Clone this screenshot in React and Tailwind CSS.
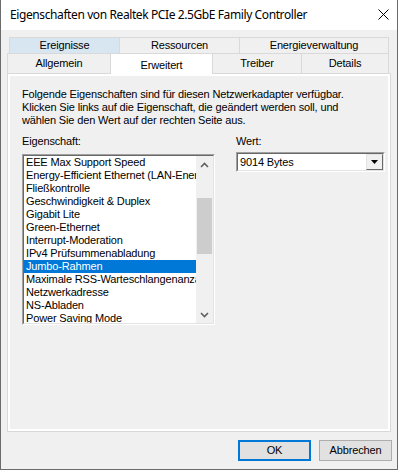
import React from "react";

const items = [
  "EEE Max Support Speed",
  "Energy-Efficient Ethernet (LAN-Energiesparmodus)",
  "Fließkontrolle",
  "Geschwindigkeit & Duplex",
  "Gigabit Lite",
  "Green-Ethernet",
  "Interrupt-Moderation",
  "IPv4 Prüfsummenabladung",
  "Jumbo-Rahmen",
  "Maximale RSS-Warteschlangenanzahl",
  "Netzwerkadresse",
  "NS-Abladen",
  "Power Saving Mode",
];

function Tab({ w, label, hover, h = "h-[20px]" }) {
  return (
    <div
      className={`${w} ${h} flex items-center justify-center border-t border-l border-r border-[#d9d9d9] -mr-px ${
        hover ? "bg-[#d8e6f2]" : "bg-[#f0f0f0]"
      }`}
    >
      {label}
    </div>
  );
}

export default function App() {
  return (
    <div className="w-[398px] h-[470px] bg-[#f0f0f0] border-l border-r border-b border-[#6b6b6b] flex flex-col font-['Liberation_Sans',Arial,sans-serif] text-[11px] tracking-[-0.15px] text-black overflow-hidden">
      {/* Title bar */}
      <div className="h-[30px] bg-white flex items-center justify-between pl-[9px] pr-[7px] shrink-0">
        <span className="font-['Noto_Sans',sans-serif] text-[12px] tracking-[-0.4px] mb-[1px]">
          Eigenschaften von Realtek PCIe 2.5GbE Family Controller
        </span>
        <svg width="11" height="11" viewBox="0 0 11 11" className="mr-[1px] mb-[2px]">
          <path d="M0.5 0.5 L10.5 10.5 M10.5 0.5 L0.5 10.5" stroke="#000" strokeWidth="1" fill="none" />
        </svg>
      </div>

      {/* Tabs */}
      <div className="mt-[7px] flex flex-col">
        <div className="flex ml-[8px] h-[16px]">
          <Tab w="w-[111px]" h="h-[16px]" label="Ereignisse" hover />
          <Tab w="w-[121px]" h="h-[16px]" label="Ressourcen" />
          <Tab w="w-[150px]" h="h-[16px]" label="Energieverwaltung" />
        </div>
        <div className="flex ml-[6px] h-[20px] relative z-10">
          <Tab w="w-[104px]" label="Allgemein" />
          <div className="w-[103px] h-[21px] -mr-px bg-white border-t border-l border-r border-[#d9d9d9] flex items-start justify-center pt-[3px]">
            Erweitert
          </div>
          <Tab w="w-[90px]" label="Treiber" />
          <Tab w="w-[88px]" label="Details" />
        </div>
      </div>

      {/* Panel */}
      <div className="ml-[6px] w-[384px] h-[359px] border border-[#d9d9d9] bg-white p-[2px] shrink-0">
        <div className="w-full h-full bg-[#f0f0f0] pl-[12px] pt-[12px]">
          <p className="leading-[13px]">
            Folgende Eigenschaften sind für diesen Netzwerkadapter verfügbar.
            <br />
            Klicken Sie links auf die Eigenschaft, die geändert werden soll, und
            <br />
            wählen Sie den Wert auf der rechten Seite aus.
          </p>

          <div className="flex mt-[8px]">
            {/* Left column */}
            <div className="w-[193px] flex flex-col">
              <div className="leading-[13px] h-[13px]">Eigenschaft:</div>
              <div className="mt-[6px] h-[171px] border border-t-[#a0a0a0] border-l-[#a0a0a0] border-b-white border-r-white">
                <div className="w-full h-full border border-t-[#696969] border-l-[#696969] border-b-[#e3e3e3] border-r-[#e3e3e3] bg-white flex">
                  <div className="flex-1 overflow-hidden">
                    {items.map((it) => (
                      <div
                        key={it}
                        className={`h-[13px] leading-[13px] pl-[2px] whitespace-nowrap ${
                          it === "Jumbo-Rahmen" ? "bg-[#0078d7] text-white" : ""
                        }`}
                      >
                        {it}
                      </div>
                    ))}
                  </div>
                  <div className="w-[17px] h-full bg-[#f0f0f0] flex flex-col">
                    <div className="h-[17px] flex items-center justify-center">
                      <svg width="9" height="6" viewBox="0 0 9 6">
                        <path d="M1 5 L4.5 1.5 L8 5" stroke="#606060" strokeWidth="1.6" fill="none" />
                      </svg>
                    </div>
                    <div className="flex-1 flex flex-col">
                      <div className="h-[25px]" />
                      <div className="h-[56px] mx-[1px] bg-[#cdcdcd]" />
                    </div>
                    <div className="h-[17px] flex items-center justify-center">
                      <svg width="9" height="6" viewBox="0 0 9 6">
                        <path d="M1 1 L4.5 4.5 L8 1" stroke="#606060" strokeWidth="1.6" fill="none" />
                      </svg>
                    </div>
                  </div>
                </div>
              </div>
            </div>

            {/* Right column */}
            <div className="ml-[21px] w-[149px] flex flex-col">
              <div className="leading-[13px] h-[13px]">Wert:</div>
              <div className="mt-[4px] h-[20px] border border-t-[#a0a0a0] border-l-[#a0a0a0] border-b-white border-r-white">
                <div className="w-full h-full border border-t-[#696969] border-l-[#696969] border-b-[#e3e3e3] border-r-[#e3e3e3] bg-white flex items-center">
                  <span className="flex-1 pl-[2px] text-[11px]">9014 Bytes</span>
                  <div className="w-[17px] h-full border border-t-[#e3e3e3] border-l-[#e3e3e3] border-b-[#696969] border-r-[#696969] bg-[#f0f0f0] flex items-center justify-center">
                    <svg width="7" height="4" viewBox="0 0 7 4">
                      <path d="M0 0 L7 0 L3.5 4 Z" fill="#000" />
                    </svg>
                  </div>
                </div>
              </div>
            </div>
          </div>
        </div>
      </div>

      {/* Buttons */}
      <div className="mt-[8px] flex justify-end gap-[8px] pr-[5px]">
        <button className="w-[73px] h-[21px] border-2 border-[#0078d7] bg-[#e1e1e1] flex items-center justify-center text-[11px]">
          OK
        </button>
        <button className="w-[73px] h-[21px] border border-[#adadad] bg-[#e1e1e1] flex items-center justify-center text-[11px]">
          Abbrechen
        </button>
      </div>
    </div>
  );
}
